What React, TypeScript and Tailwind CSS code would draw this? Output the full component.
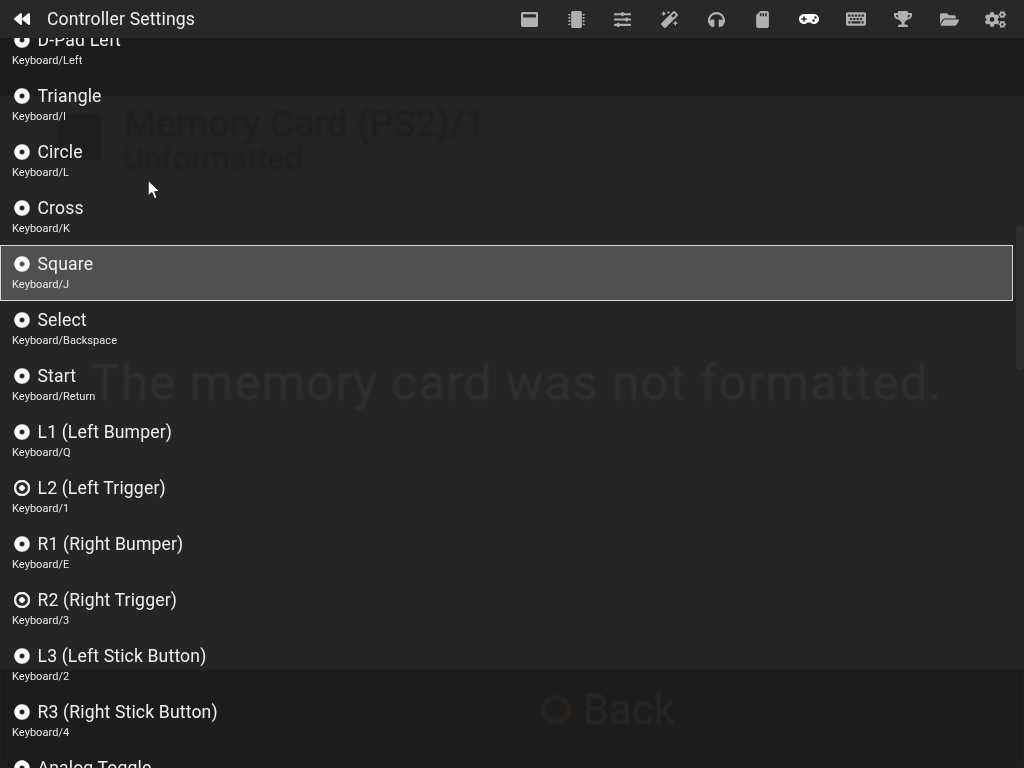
import React from "react";
import {
  FaBackward, FaWindowMaximize, FaMicrochip, FaSlidersH, FaMagic, FaHeadphones, FaSdCard,
  FaGamepad, FaKeyboard, FaTrophy, FaFolderOpen, FaCogs, FaDotCircle, FaRegDotCircle,
} from "react-icons/fa";

const tabs = [
  { I: FaWindowMaximize, s: 17 },
  { I: FaMicrochip, s: 17 },
  { I: FaSlidersH, s: 17 },
  { I: FaMagic, s: 17 },
  { I: FaHeadphones, s: 17 },
  { I: FaSdCard, s: 17 },
  { I: FaGamepad, s: 20, active: true },
  { I: FaKeyboard, s: 20 },
  { I: FaTrophy, s: 18 },
  { I: FaFolderOpen, s: 19 },
  { I: FaCogs, s: 21 },
];

const rows: { t: string; k: string; alt?: boolean; sel?: boolean }[] = [
  { t: "D-Pad Left", k: "Keyboard/Left" },
  { t: "Triangle", k: "Keyboard/I" },
  { t: "Circle", k: "Keyboard/L" },
  { t: "Cross", k: "Keyboard/K" },
  { t: "Square", k: "Keyboard/J", sel: true },
  { t: "Select", k: "Keyboard/Backspace" },
  { t: "Start", k: "Keyboard/Return" },
  { t: "L1 (Left Bumper)", k: "Keyboard/Q" },
  { t: "L2 (Left Trigger)", k: "Keyboard/1", alt: true },
  { t: "R1 (Right Bumper)", k: "Keyboard/E" },
  { t: "R2 (Right Trigger)", k: "Keyboard/3", alt: true },
  { t: "L3 (Left Stick Button)", k: "Keyboard/2" },
  { t: "R3 (Right Stick Button)", k: "Keyboard/4" },
  { t: "Analog Toggle", k: "" },
];

export default function App() {
  return (
    <div className="relative w-[1024px] h-[768px] overflow-hidden flex flex-col bg-[#252525] text-white font-['Roboto',sans-serif]">
      <header className="h-[38px] shrink-0 flex items-center bg-[#282828] pr-[5px] z-10">
        <div className="flex items-center blur-[0.4px]">
          <FaBackward size={16} className="ml-[14px] text-white" />
          <h1 className="ml-[17px] mt-[2px] text-[17.6px] leading-none tracking-[0.15px] text-[#f0f0f0] font-normal">Controller Settings</h1>
        </div>
        <nav className="ml-auto flex items-center blur-[0.4px]">
          {tabs.map(({ I, s, active }, i) => (
            <div key={i} className="w-[46.6px] flex items-center justify-center">
              <I size={s} className={active ? "text-white" : "text-[#b0b0b0]"} />
            </div>
          ))}
        </nav>
      </header>

      <main className="relative flex-1 overflow-hidden">
        <div className="absolute inset-0 flex flex-col">
          <div className="h-[58px] bg-[#1c1c1c]" />
          <div className="flex-1 flex flex-col bg-[#252525]">
            <div className="flex pl-[58px] pt-[10px] gap-[23px] blur-[1px]">
              <div className="w-[42px] h-[46px] mt-[8px] bg-[#1f1f1f]" />
              <div className="flex flex-col">
                <span className="block text-[37.4px] leading-[34px] text-[#1f1f1f]">Memory Card (PS2)/1</span>
                <span className="block text-[32px] leading-[36px] text-[#202020]">Unformatted</span>
              </div>
            </div>
            <div className="mt-[179px] ml-[90px] text-[50px] leading-[56px] tracking-[0.8px] text-[#2f2f2f] blur-[1px]">The memory card was not formatted.</div>
          </div>
          <div className="h-[98px] bg-[#1c1c1c] flex items-center justify-center pl-[192px] pb-[18px] gap-[12px] blur-[1px]">
            <div className="w-[30px] h-[30px] rounded-full border-[5px] border-[#262220] bg-[#1f1d1c]" />
            <span className="text-[42px] leading-none text-[#272727]">Back</span>
          </div>
        </div>

        <ul className="relative -mt-[17px] w-[1013px] blur-[0.4px]">
          {rows.map((r) => {
            const Icon = r.alt ? FaRegDotCircle : FaDotCircle;
            return (
              <li
                key={r.t}
                className={
                  "h-[56px] box-border flex flex-col pl-[12px] " +
                  (r.sel ? "bg-[#505050] outline outline-1 -outline-offset-1 outline-[#d6d6d6]" : "")
                }
              >
                <div className="h-[38px] shrink-0 flex items-center">
                  {r.alt ? (
                    <Icon size={16} stroke="currentColor" strokeWidth={30} className="ml-[2px] text-white shrink-0" />
                  ) : (
                    <Icon size={16} className="ml-[2px] text-white shrink-0" />
                  )}
                  <span className="ml-[7.5px] mt-[2px] text-[17.6px] leading-none tracking-[0.15px] text-[#f0f0f0]">{r.t}</span>
                </div>
                <span className="text-[11px] leading-[12px] -mt-[4px] tracking-[0.05px] text-[#e8e8e8]">{r.k}</span>
              </li>
            );
          })}
        </ul>

        <div className="absolute right-0 top-[188px] w-[8px] h-[144px] bg-[#2f2f2f] rounded-sm" />
        <svg className="absolute left-[147px] top-[142px]" width="14" height="20" viewBox="0 0 13 19">
          <path d="M1 0.5 L1 15 L4.6 11.9 L7 17.8 L9.4 16.8 L7 11 L11.8 11 Z" fill="#ffffff" stroke="#111111" strokeWidth="0.8" />
        </svg>
      </main>
    </div>
  );
}
